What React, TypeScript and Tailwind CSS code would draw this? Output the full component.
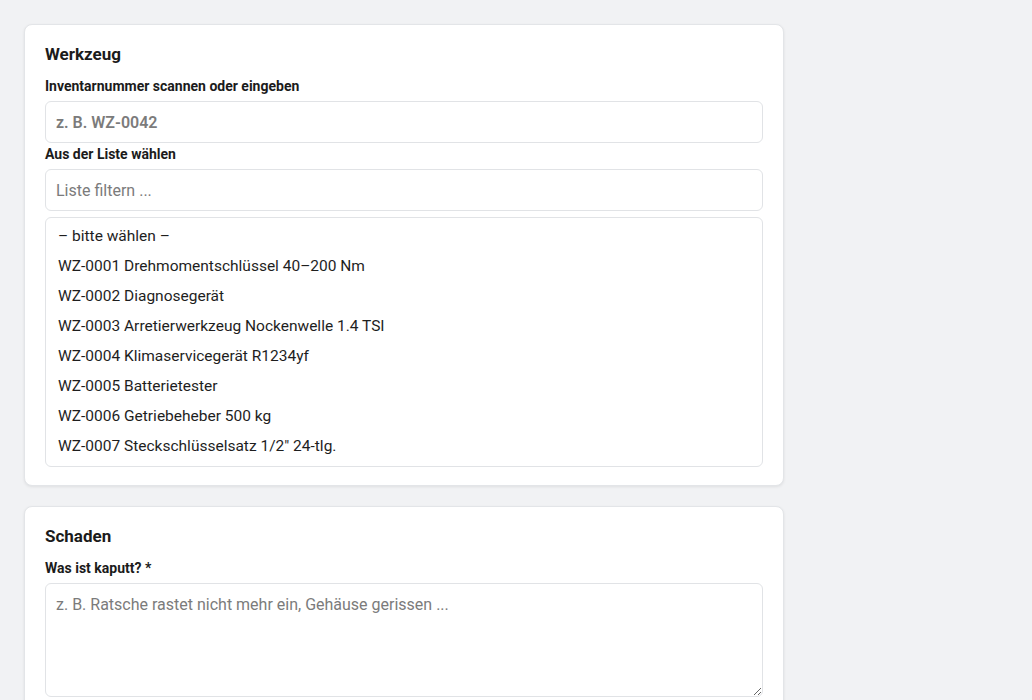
import React, { useState } from "react";

const tools = [
  "WZ-0001 Drehmomentschlüssel 40–200 Nm",
  "WZ-0002 Diagnosegerät",
  "WZ-0003 Arretierwerkzeug Nockenwelle 1.4 TSI",
  "WZ-0004 Klimaservicegerät R1234yf",
  "WZ-0005 Batterietester",
  "WZ-0006 Getriebeheber 500 kg",
  'WZ-0007 Steckschlüsselsatz 1/2" 24-tlg.',
];

const font = { fontFamily: "Roboto, 'Noto Sans', sans-serif" };

function Card({ title, children }: { title: string; children: React.ReactNode }) {
  return (
    <section className="w-[760px] rounded-lg border border-[#e3e5e8] bg-white px-5 pt-[17px] pb-[18px] shadow-[0_1px_3px_rgba(0,0,0,0.08)]">
      <h2 className="text-[17px] font-bold leading-6 text-[#1b1b1b]">{title}</h2>
      <div className="mt-[10px]">{children}</div>
    </section>
  );
}

function Label({ children }: { children: React.ReactNode }) {
  return (
    <label className="block text-[14px] font-bold leading-5 text-[#1b1b1b]">
      {children}
    </label>
  );
}

export default function App() {
  const [filter, setFilter] = useState("");
  const [selected, setSelected] = useState(-1);
  const items = tools.filter((t) => t.toLowerCase().includes(filter.toLowerCase()));

  return (
    <div className="min-h-[700px] bg-[#f1f2f4] p-6" style={font}>
      <div className="flex flex-col gap-5">
        <Card title="Werkzeug">
          <Label>Inventarnummer scannen oder eingeben</Label>
          <input
            className="mt-[5px] block h-[42px] w-full rounded-md border border-[#e1e3e6] bg-white px-[10px] text-[16px] font-semibold text-[#1b1b1b] outline-none placeholder:text-[#7b7b7b]"
            placeholder="z. B. WZ-0042"
          />
          <div className="mt-[1px]">
            <Label>Aus der Liste wählen</Label>
          </div>
          <input
            value={filter}
            onChange={(e) => setFilter(e.target.value)}
            className="mt-[5px] block h-[42px] w-full rounded-md border border-[#e1e3e6] bg-white px-[10px] text-[16px] text-[#1b1b1b] outline-none placeholder:text-[#7b7b7b]"
            placeholder="Liste filtern ..."
          />
          <div
            role="listbox"
            className="mt-[6px] rounded-md border border-[#e1e3e6] bg-white py-1 text-[15.5px] text-[#1e1e1e]"
          >
            <div
              onClick={() => setSelected(-1)}
              className="flex h-[30px] cursor-default items-center px-3"
            >
              – bitte wählen –
            </div>
            {items.map((t, i) => (
              <div
                key={t}
                onClick={() => setSelected(i)}
                className={
                  selected === i
                    ? "flex h-[30px] cursor-default items-center bg-[#e8eefc] px-3"
                    : "flex h-[30px] cursor-default items-center px-3"
                }
              >
                {t}
              </div>
            ))}
          </div>
        </Card>

        <Card title="Schaden">
          <Label>Was ist kaputt? *</Label>
          <textarea
            className="mt-[5px] block h-[114px] w-full resize-y rounded-md border border-[#e1e3e6] bg-white px-[10px] py-[9px] text-[16px] text-[#1b1b1b] outline-none placeholder:text-[#7b7b7b]"
            placeholder="z. B. Ratsche rastet nicht mehr ein, Gehäuse gerissen ..."
          />
        </Card>
      </div>
    </div>
  );
}
